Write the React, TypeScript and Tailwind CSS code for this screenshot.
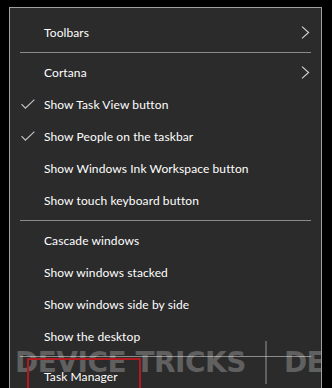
import type { ReactNode } from 'react'

type Item = { label: string; checked?: boolean; submenu?: boolean } | 'sep'

const items: Item[] = [
  { label: 'Toolbars', submenu: true },
  'sep',
  { label: 'Cortana', submenu: true },
  { label: 'Show Task View button', checked: true },
  { label: 'Show People on the taskbar', checked: true },
  { label: 'Show Windows Ink Workspace button' },
  { label: 'Show touch keyboard button' },
  'sep',
  { label: 'Cascade windows' },
  { label: 'Show windows stacked' },
  { label: 'Show windows side by side' },
  { label: 'Show the desktop' },
  'sep',
  { label: 'Task Manager' },
]

function Check() {
  return (
    <svg width="14" height="10" viewBox="0 0 14 10" fill="none">
      <path d="M0.5 5.2 L4.4 9.2 L13.4 0.6" stroke="#c8c8c8" strokeWidth="1.1" />
    </svg>
  )
}

function Chevron() {
  return (
    <svg width="9" height="13" viewBox="0 0 9 13" fill="none">
      <path d="M1 0.6 L7.6 6.5 L1 12.4" stroke="#d0d0d0" strokeWidth="1.2" />
    </svg>
  )
}

function Row({ children }: { children: ReactNode }) {
  return <div className="flex h-8 items-center">{children}</div>
}

export default function App() {
  return (
    <div className="relative h-[388px] w-[332px] overflow-hidden bg-black font-['Lato',sans-serif]">
      <div className="ml-[9px] mt-[7px] w-[313px] border border-[#a0a0a0] bg-[#2b2b2b] pt-2 pb-6">
        {items.map((it, i) =>
          it === 'sep' ? (
            <div key={i} className="px-[10px] pt-[4px] pb-[3px]">
              <div className="h-px bg-[#8a8a8a]" />
            </div>
          ) : (
            <Row key={i}>
              <div className="flex w-[34px] pl-[11px]">{it.checked && <Check />}</div>
              <span className="flex-1 pt-[1px] text-[12px] tracking-[0.1px] text-white">{it.label}</span>
              {it.submenu && (
                <div className="mr-[11px]">
                  <Chevron />
                </div>
              )}
            </Row>
          ),
        )}
      </div>

      {/* watermark overlay */}
      <div className="pointer-events-none absolute left-[15px] top-[341px] flex h-[43px] w-[306px] items-center overflow-hidden font-['DejaVu_Sans',sans-serif] text-[28px] font-bold leading-none tracking-[-0.5px] text-white/25">
        <span className="shrink-0">DEVICE TRICKS</span>
        <div className="ml-[19px] h-full w-[2px] shrink-0 bg-white/25" />
        <span className="ml-[17px] shrink-0">DEV</span>
      </div>

      {/* highlight box */}
      <div className="absolute left-[27px] top-[358px] h-[40px] w-[114px] border-2 border-[#b3191d]" />
    </div>
  )
}
